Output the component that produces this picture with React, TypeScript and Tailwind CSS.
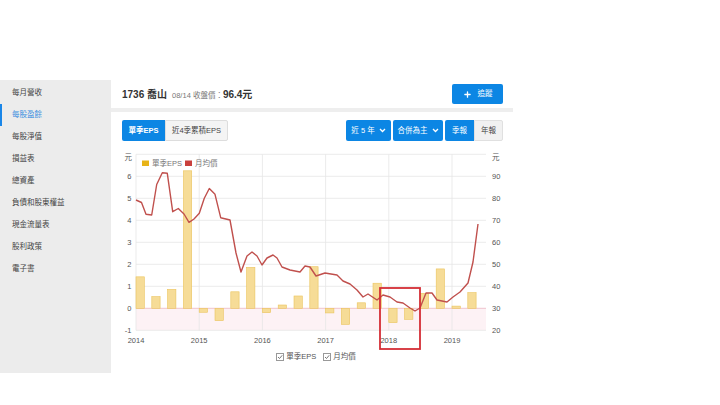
import { Plus } from 'lucide-react';

const menu = ['每月營收', '每股盈餘', '每股淨值', '損益表', '總資產', '負債和股東權益', '現金流量表', '股利政策', '電子書'];

// quarterly EPS, 2014Q1 .. 2019Q2
const eps = [1.43, 0.53, 0.86, 6.25, -0.18, -0.56, 0.75, 1.86, -0.2, 0.15, 0.56, 1.89, -0.21, -0.73, 0.25, 1.14, -0.65, -0.5, 0.68, 1.79, 0.1, 0.71];

// monthly average price, traced in page coords
const price: [number, number][] = [
  [136, 200], [141.5, 202.5], [146, 214.3], [151.7, 215], [156.7, 184.5], [162.3, 172.7], [167.3, 173.3],
  [172.7, 211.7], [178.3, 208.5], [184, 214], [189, 222.3], [194, 219], [199.3, 213.3], [204.3, 198.3],
  [209.3, 188.5], [215, 194.3], [220.7, 217.7], [230, 220], [236, 253], [241, 272], [247, 256], [252, 252],
  [257, 256], [262, 265], [267, 258], [273, 255], [277, 258], [282, 267], [290, 270], [300, 272], [305, 266],
  [310, 267], [316, 276], [325, 273], [337, 275], [343, 281], [350, 284], [357, 290], [363, 297], [368, 294],
  [377, 300], [383, 295], [390, 297], [397, 302], [403, 303], [410, 308], [415, 311], [420, 308], [426, 293],
  [432, 293], [437, 300], [447, 302], [453, 297], [460, 292], [468, 283], [473, 262], [478, 224],
];

const ZERO = 308.3;
const UNIT = 22;
const years = [2014, 2015, 2016, 2017, 2018, 2019];
const yearX = (i: number) => 136 + i * 63.2;

function Chevron() {
  return (
    <svg width="7" height="5" viewBox="0 0 7 5" className="ml-1">
      <path d="M1 1l2.5 2.5L6 1" fill="none" stroke="white" strokeWidth="1.3" />
    </svg>
  );
}

function CheckBox() {
  return (
    <svg width="8" height="8" viewBox="0 0 8 8" className="mr-[2px]">
      <rect x="0.5" y="0.5" width="7" height="7" fill="white" stroke="#999" />
      <path d="M2 4l1.5 1.5L6.2 2.3" fill="none" stroke="#666" strokeWidth="0.9" />
    </svg>
  );
}

function EpsChart() {
  const leftTicks = [-1, 0, 1, 2, 3, 4, 5, 6];
  return (
    <svg width="402" height="209" viewBox="111 141 402 209" className="block">
      {/* negative zone */}
      <rect x="136" y={ZERO} width="350" height={UNIT} fill="#fdf2f5" />
      {/* horizontal grid */}
      {[-1, 1, 2, 3, 4, 5, 6, 7].map((v) => (
        <line key={v} x1="136" x2="486" y1={ZERO - v * UNIT} y2={ZERO - v * UNIT} stroke="#e6e6e6" strokeWidth="0.8" />
      ))}
      {/* vertical grid */}
      {years.map((y, i) => (
        <line key={y} x1={yearX(i)} x2={yearX(i)} y1={154.3} y2={330.3} stroke="#e6e6e6" strokeWidth="0.8" />
      ))}
      <line x1="136" x2="486" y1={ZERO} y2={ZERO} stroke="#efc3cd" strokeWidth="1" />

      {/* bars */}
      {eps.map((v, i) => {
        const x = 136 + i * 15.8;
        const y = v >= 0 ? ZERO - v * UNIT : ZERO;
        return (
          <rect key={i} x={x} y={y} width="8.3" height={Math.abs(v) * UNIT} fill="#f6dc97" stroke="#ebc45c" strokeWidth="0.6" />
        );
      })}

      {/* price line */}
      <polyline points={price.map((p) => p.join(',')).join(' ')} fill="none" stroke="#c0504d" strokeWidth="1.4" strokeLinejoin="round" />

      {/* axis labels */}
      <g fontFamily="'Liberation Sans', 'Noto Sans CJK TC', sans-serif" fontSize="7.5" fill="#555">
        <text x="132" y="160" textAnchor="end">元</text>
        <text x="492" y="160">元</text>
        {leftTicks.map((v) => (
          <text key={v} x="131.5" y={ZERO - v * UNIT + 2.7} textAnchor="end">{v}</text>
        ))}
        {[20, 30, 40, 50, 60, 70, 80, 90].map((v) => (
          <text key={v} x="492" y={ZERO - ((v - 30) / 10) * UNIT + 2.7}>{v}</text>
        ))}
        {years.map((y, i) => (
          <text key={y} x={yearX(i)} y="343" textAnchor="middle">{y}</text>
        ))}
      </g>

      {/* top legend */}
      <g fontFamily="'Liberation Sans', 'Noto Sans CJK TC', sans-serif" fontSize="7.5" fill="#777">
        <rect x="142" y="160.5" width="7" height="5.5" fill="#e8b418" />
        <text x="152" y="166">單季EPS</text>
        <rect x="185" y="160.5" width="7" height="5.5" fill="#c9403d" />
        <text x="195" y="166">月均價</text>
      </g>

      {/* highlight box */}
      <rect x="380" y="288" width="40" height="61" fill="none" stroke="#d42e36" strokeWidth="1.8" />
    </svg>
  );
}

export default function App() {
  return (
    <div className="w-[720px] h-[405px] bg-white overflow-hidden font-['Liberation_Sans','Noto_Sans_CJK_TC',sans-serif]">
      <div className="h-[80px]" />
      <div className="flex w-[513px] h-[293px]">
        <aside className="w-[111px] bg-[#ececec] pt-[2px]">
          {menu.map((m) => {
            const active = m === '每股盈餘';
            return (
              <div
                key={m}
                className={`h-[22px] flex items-center text-[7.5px] border-l-2 pl-[10px] ${
                  active ? 'border-[#1a86e8] text-[#3d8fdf]' : 'border-transparent text-[#444]'
                }`}
              >
                {m}
              </div>
            );
          })}
        </aside>

        <main className="flex-1 flex flex-col bg-[#eeeeee]">
          <header className="h-[28px] bg-white flex items-center justify-between pl-[11px] pr-[10px] shrink-0">
            <div className="flex items-baseline">
              <span className="text-[10px] font-bold text-[#333]">1736 喬山</span>
              <span className="ml-[5px] text-[7.5px] text-[#777]">08/14 收盤價：</span>
              <span className="text-[10px] font-bold text-[#333]">96.4元</span>
            </div>
            <button className="w-[51px] h-[20px] rounded-[2px] bg-[#0c86e4] text-white flex items-center justify-center gap-[6px] text-[7.5px]">
              <Plus size={9} strokeWidth={3.5} />
              <span>追蹤</span>
            </button>
          </header>

          <section className="mt-1 flex-1 bg-white flex flex-col">
            <div className="pt-2 pl-[11px] pr-[10px] flex justify-between">
              <div className="flex h-[21px] text-[7.5px]">
                <button className="w-[43px] bg-[#0c86e4] text-white font-bold rounded-l-[2px]">單季EPS</button>
                <button className="w-[63px] bg-[#f4f4f4] text-[#444] border border-[#dddddd] rounded-r-[2px]">近4季累積EPS</button>
              </div>
              <div className="flex h-[21px] text-[7.5px] gap-[2px]">
                <button className="w-[45px] bg-[#0c86e4] text-white rounded-[2px] flex items-center justify-center">
                  近 5 年<Chevron />
                </button>
                <button className="w-[50px] bg-[#0c86e4] text-white rounded-[2px] flex items-center justify-center">
                  合併為主<Chevron />
                </button>
                <div className="flex">
                  <button className="w-[29px] bg-[#0c86e4] text-white rounded-l-[2px]">季報</button>
                  <button className="w-[29px] bg-[#f1f1f1] text-[#444] border border-[#e0e0e0] rounded-r-[2px]">年報</button>
                </div>
              </div>
            </div>

            <EpsChart />

            <div className="h-[14px] flex items-center justify-center text-[7.5px] text-[#555] pl-[8px]">
              <CheckBox />
              <span>單季EPS</span>
              <span className="w-[7px]" />
              <CheckBox />
              <span>月均價</span>
            </div>
          </section>
        </main>
      </div>
    </div>
  );
}
